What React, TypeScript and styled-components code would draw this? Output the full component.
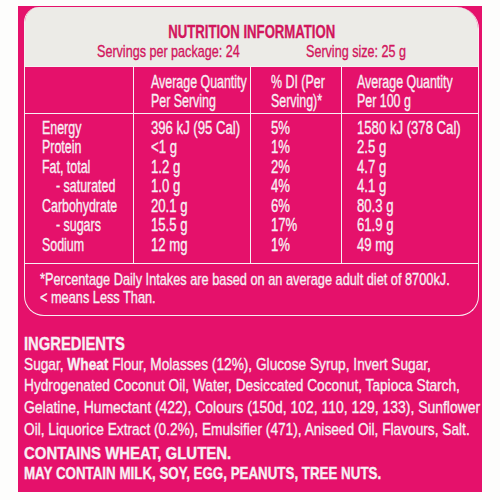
import React from "react";
import styled, { createGlobalStyle } from "styled-components";

const PINK = "#e5116b";
const INK = "#d2165d";
const PAPER = "#ecebe7";
const LINE = "#f8eff4";

const Global = createGlobalStyle`
  body {
    margin: 0;
    background: #fdfdfc;
    font-family: "Liberation Sans", Arial, sans-serif;
  }
`;

const Page = styled.div`
  width: 500px;
  height: 500px;
  padding: 6px 0 0 18px;
  box-sizing: border-box;
  overflow: hidden;
`;

const Panel = styled.section`
  width: 464px;
  height: 486px;
  background: ${PINK};
  padding: 1px 3px 0 5.5px;
  box-sizing: border-box;
  color: ${LINE};
  overflow: hidden;
`;

// the label's type is a tall, medium-weight condensed face:
// squeeze a regular sans sideways and thicken its strokes a little
const Sq = styled.div<{ $sx?: number; $center?: boolean }>`
  white-space: nowrap;
  -webkit-text-stroke: 0.35px currentColor;
  transform: scaleX(${(p) => p.$sx ?? 0.71});
  transform-origin: ${(p) => (p.$center ? "center" : "left")} top;
`;

const Box = styled.div`
  border: 1.5px solid ${LINE};
  border-top: none;
  border-radius: 15px 22px 20px 20px;
  overflow: hidden;
`;

const TitleArea = styled.header`
  height: 59px;
  background: ${PAPER};
  color: ${INK};
  box-sizing: border-box;
  padding-top: 15px;
`;

const Title = styled.h1`
  margin: 0;
  font-size: 18px;
  font-weight: bold;
  line-height: 20px;
  text-align: center;
`;

const Servings = styled.div`
  display: grid;
  grid-template-columns: 209px 1fr;
  font-size: 17px;
  line-height: 20px;
  padding-left: 72px;
`;

const Grid = styled.div`
  display: grid;
  grid-template-columns: 109px 117px 91px 1fr;
  border-top: 1.5px solid ${LINE};
`;

const HeadCell = styled.div<{ $pad?: number; $last?: boolean }>`
  height: 46.5px;
  box-sizing: border-box;
  padding: 6px 0 0 ${(p) => p.$pad ?? 17}px;
  font-size: 18px;
  line-height: 19px;
  border-bottom: 1.5px solid ${LINE};
  border-right: ${(p) => (p.$last ? "none" : `1.5px solid ${LINE}`)};
`;

const BodyCell = styled.div<{ $pad?: number; $last?: boolean }>`
  height: 149px;
  box-sizing: border-box;
  padding: 5px 0 0 ${(p) => p.$pad ?? 17}px;
  font-size: 18px;
  line-height: 19.5px;
  border-right: ${(p) => (p.$last ? "none" : `1.5px solid ${LINE}`)};
`;

const Row = styled.div<{ $indent?: boolean }>`
  padding-left: ${(p) => (p.$indent ? 14 : 0)}px;
`;

const Footer = styled.div`
  border-top: 1.5px solid ${LINE};
  height: 52px;
  box-sizing: border-box;
  padding: 7px 0 0 15px;
  font-size: 17px;
  line-height: 18.5px;
`;

const Ingredients = styled.div`
  padding-top: 18px;
  font-size: 17px;
  line-height: 21.7px;
`;

const Heading = styled.h2`
  margin: 0;
  font-size: 18px;
  font-weight: bold;
  line-height: 20px;
`;

const Allergens = styled.div`
  margin-top: 4px;
  font-weight: bold;
  font-size: 17px;
  line-height: 20px;
`;

const rows: [string, string, string, string, boolean][] = [
  ["Energy", "396 kJ (95 Cal)", "5%", "1580 kJ (378 Cal)", false],
  ["Protein", "<1 g", "1%", "2.5 g", false],
  ["Fat, total", "1.2 g", "2%", "4.7 g", false],
  ["- saturated", "1.0 g", "4%", "4.1 g", true],
  ["Carbohydrate", "20.1 g", "6%", "80.3 g", false],
  ["- sugars", "15.5 g", "17%", "61.9 g", true],
  ["Sodium", "12 mg", "1%", "49 mg", false],
];

export default function App() {
  return (
    <Page>
      <Global />
      <Panel>
        <Box>
          <TitleArea>
            <Title>
              <Sq $sx={0.73} $center>
                NUTRITION INFORMATION
              </Sq>
            </Title>
            <Servings>
              <Sq $sx={0.74}>Servings per package: 24</Sq>
              <Sq $sx={0.74}>Serving size: 25 g</Sq>
            </Servings>
          </TitleArea>
          <Grid>
            <HeadCell />
            <HeadCell>
              <Sq $sx={0.69}>Average Quantity</Sq>
              <Sq $sx={0.69}>Per Serving</Sq>
            </HeadCell>
            <HeadCell $pad={20}>
              <Sq $sx={0.69}>% DI (Per</Sq>
              <Sq $sx={0.69}>Serving)*</Sq>
            </HeadCell>
            <HeadCell $pad={15} $last>
              <Sq $sx={0.69}>Average Quantity</Sq>
              <Sq $sx={0.69}>Per 100 g</Sq>
            </HeadCell>
            <BodyCell>
              {rows.map((r) => (
                <Row key={r[0]} $indent={r[4]}>
                  <Sq $sx={0.69}>{r[0]}</Sq>
                </Row>
              ))}
            </BodyCell>
            <BodyCell>
              {rows.map((r) => (
                <Row key={r[0]}>
                  <Sq $sx={0.73}>{r[1]}</Sq>
                </Row>
              ))}
            </BodyCell>
            <BodyCell $pad={20}>
              {rows.map((r) => (
                <Row key={r[0]}>
                  <Sq $sx={0.73}>{r[2]}</Sq>
                </Row>
              ))}
            </BodyCell>
            <BodyCell $pad={15} $last>
              {rows.map((r) => (
                <Row key={r[0]}>
                  <Sq $sx={0.73}>{r[3]}</Sq>
                </Row>
              ))}
            </BodyCell>
          </Grid>
          <Footer>
            <Sq $sx={0.75}>
              *Percentage Daily Intakes are based on an average adult diet of 8700kJ.
            </Sq>
            <Sq $sx={0.75}>&lt; means Less Than.</Sq>
          </Footer>
        </Box>
        <Ingredients>
          <Heading>
            <Sq $sx={0.82}>INGREDIENTS</Sq>
          </Heading>
          <Sq $sx={0.805}>
            Sugar, <b>Wheat</b> Flour, Molasses (12%), Glucose Syrup, Invert Sugar,
          </Sq>
          <Sq $sx={0.805}>Hydrogenated Coconut Oil, Water, Desiccated Coconut, Tapioca Starch,</Sq>
          <Sq $sx={0.82}>
            Gelatine, Humectant (422), Colours (150d, 102, 110, 129, 133), Sunflower
          </Sq>
          <Sq $sx={0.805}>
            Oil, Liquorice Extract (0.2%), Emulsifier (471), Aniseed Oil, Flavours, Salt.
          </Sq>
          <Allergens>
            <Sq $sx={0.88}>CONTAINS WHEAT, GLUTEN.</Sq>
            <Sq $sx={0.785}>MAY CONTAIN MILK, SOY, EGG, PEANUTS, TREE NUTS.</Sq>
          </Allergens>
        </Ingredients>
      </Panel>
    </Page>
  );
}
